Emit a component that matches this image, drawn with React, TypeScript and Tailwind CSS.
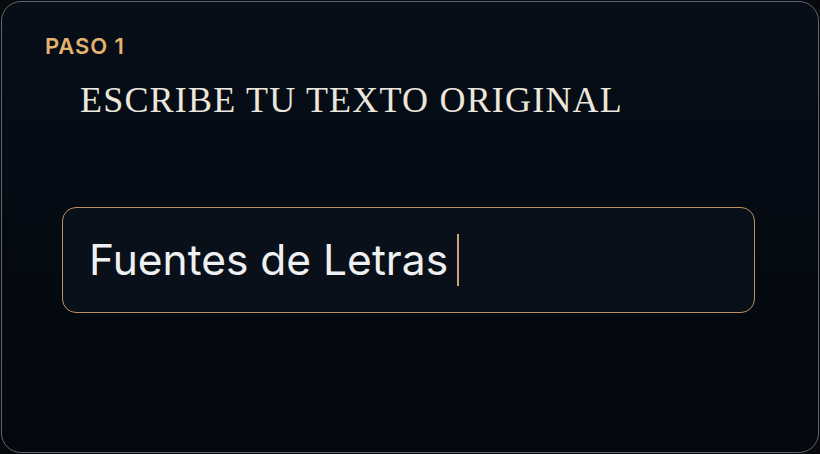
import React from "react";

export default function App() {
  return (
    <div className="w-[820px] h-[454px] bg-[#08090c] p-px">
      <div className="h-full w-full rounded-[20px] border border-[#60646d] bg-gradient-to-b from-[#070e18] to-[#03070e] pt-[33px] pl-[43px] flex flex-col">
        <div
          className="text-[22px] leading-none font-semibold text-[#e3b36f] tracking-[0.9px]"
          style={{ fontFamily: "Inter, 'Noto Sans', sans-serif" }}
        >
          PASO 1
        </div>
        <h1
          className="mt-[25px] ml-[35px] text-[36px] leading-none text-[#ece6dc] tracking-[1.2px] font-normal"
          style={{ fontFamily: "'Liberation Serif', 'DejaVu Serif', serif" }}
        >
          ESCRIBE TU TEXTO ORIGINAL
        </h1>
        <div className="mt-[89px] ml-[17px] w-[693px] h-[106px] rounded-[14px] border border-[#bb935a] bg-[#09101a] flex items-center pl-[26px]">
          <span
            className="text-[42.5px] leading-none text-[#eef0f2]"
            style={{ fontFamily: "Inter, 'Noto Sans', sans-serif" }}
          >
            Fuentes de Letras
          </span>
          <span className="ml-[9px] w-[2px] h-[52px] bg-[#c9a677]" />
        </div>
      </div>
    </div>
  );
}
